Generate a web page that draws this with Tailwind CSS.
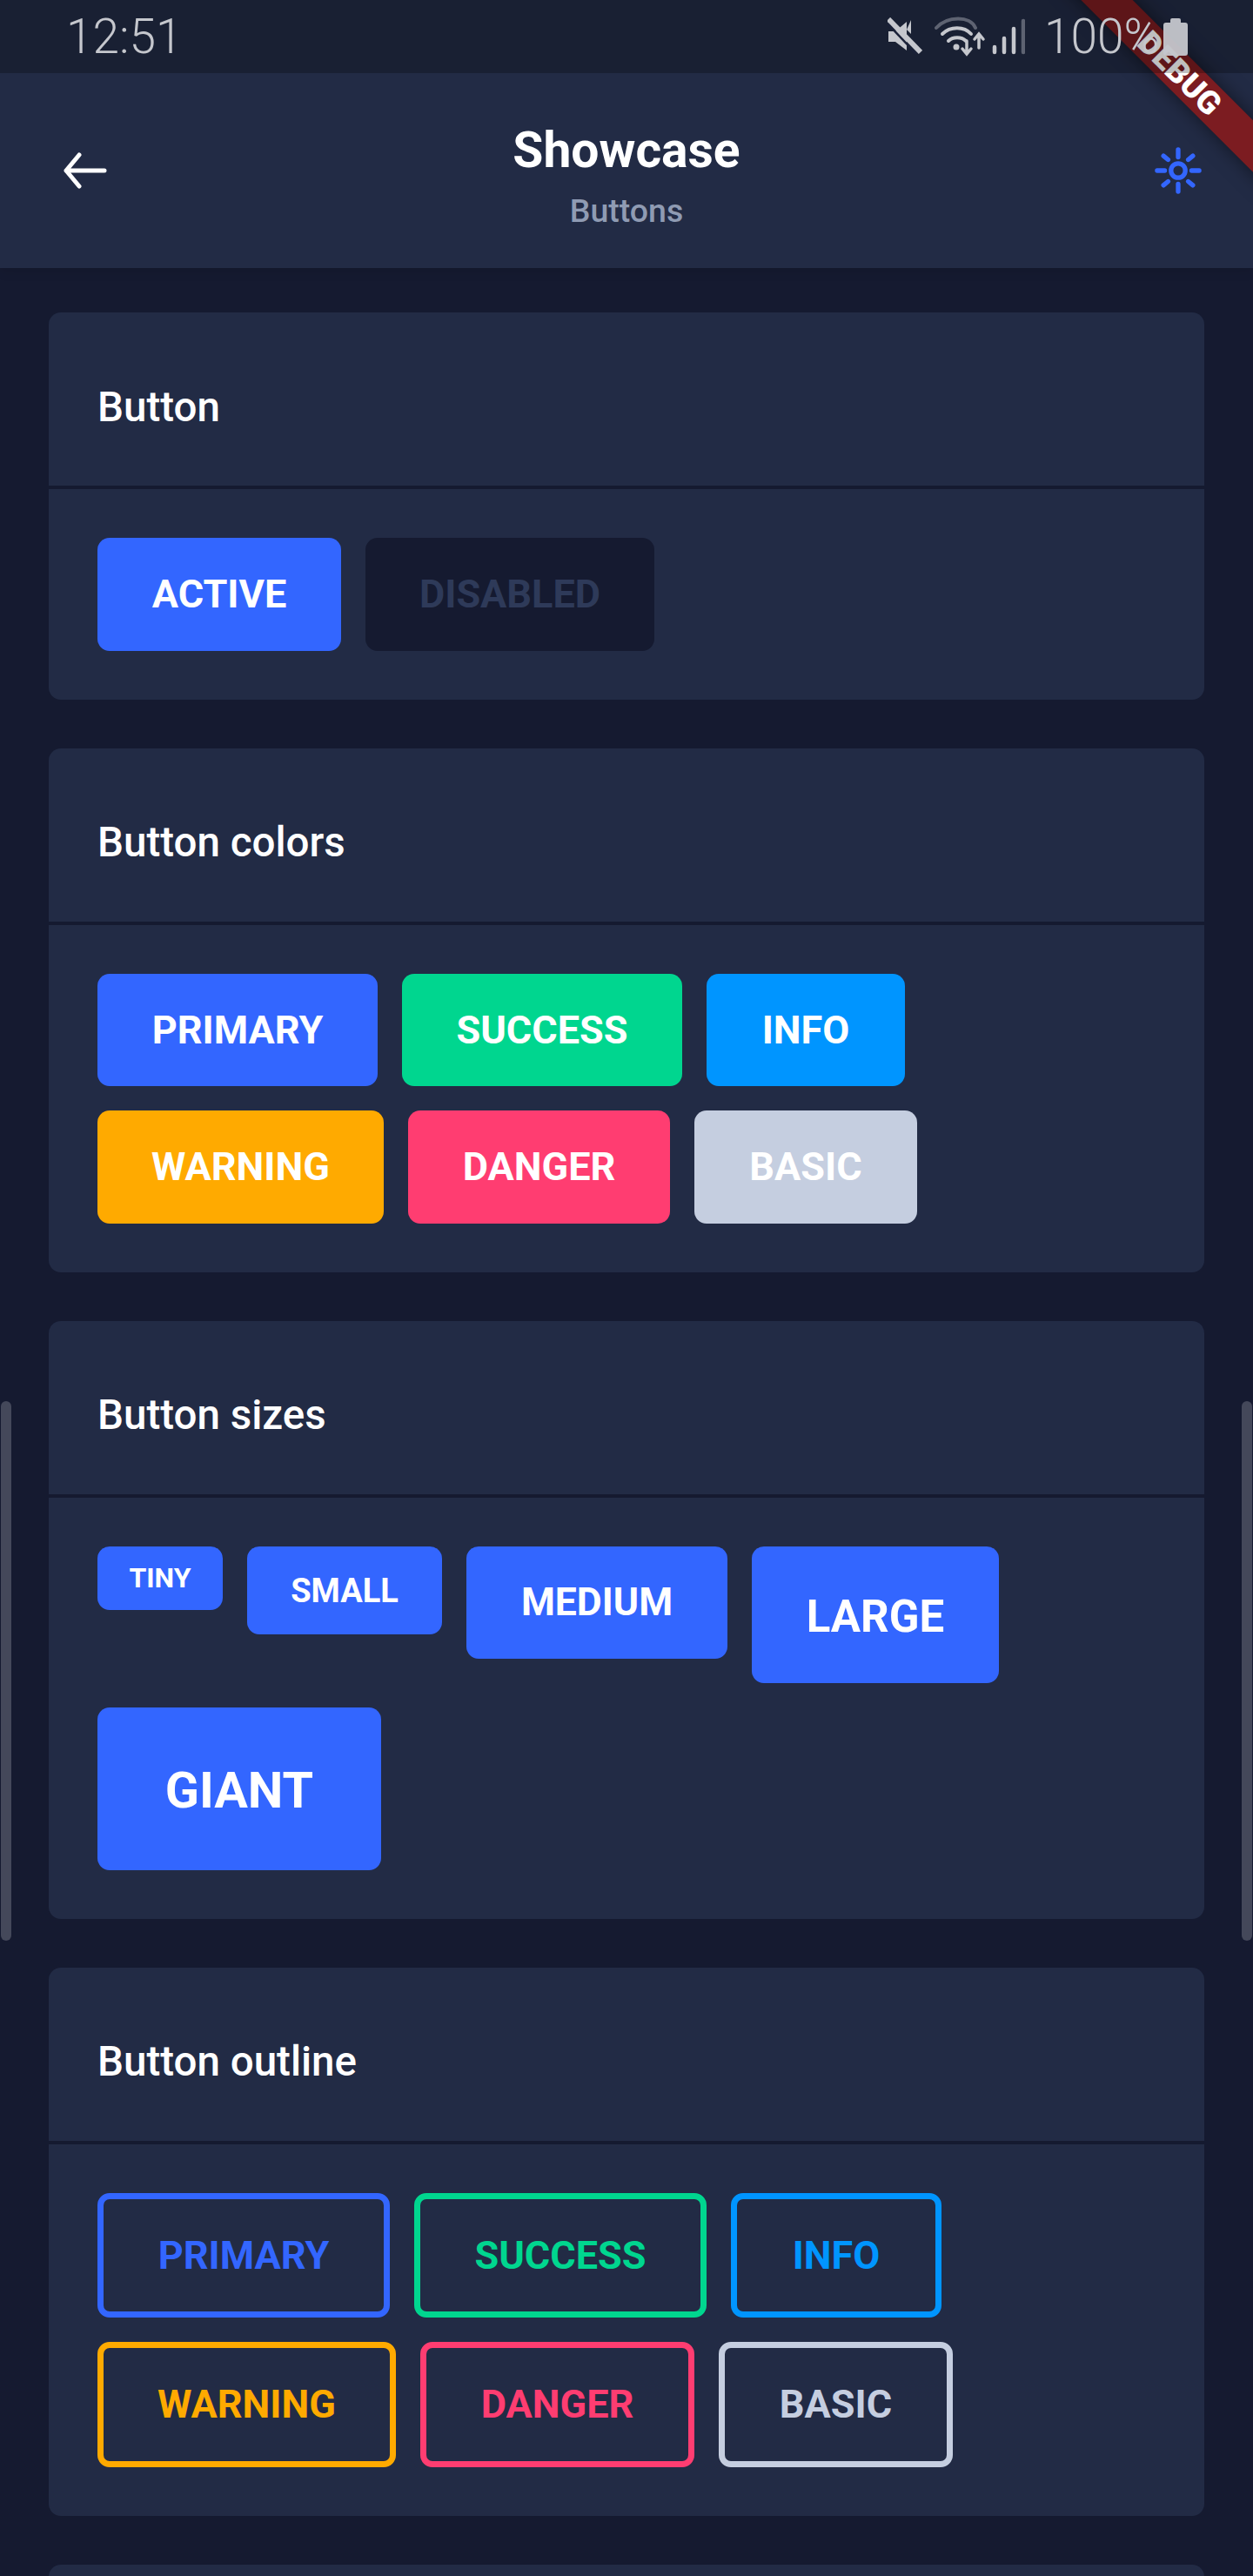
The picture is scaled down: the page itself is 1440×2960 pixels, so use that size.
<!DOCTYPE html>
<html lang="en">
<head>
  <meta charset="UTF-8" />
  <meta name="viewport" content="width=device-width, initial-scale=1.0" />
  <title>Showcase - Buttons</title>
  <script src="https://cdn.jsdelivr.net/npm/@tailwindcss/browser@4"></script>
</head>
<body class="bg-[#151A30] font-['Roboto',sans-serif] text-white">
<div class="relative w-[1440px] h-[2960px] overflow-hidden">

  <!-- app bar -->
  <header class="h-[308px] bg-[#222B45] pt-[84px] flex items-center shadow-[0_2px_14px_rgba(0,0,0,0.12)]">
    <button class="w-[168px] h-[224px] flex items-center justify-center shrink-0 pl-[28px]">
      <svg width="50" height="44" viewBox="0 0 50 44" fill="none" stroke="#fff" stroke-width="5" stroke-linecap="round" stroke-linejoin="round"><path d="M47 22H3M18 4 3 22l15 18" /></svg>
    </button>
    <div class="flex-1 text-center pt-[12px]">
      <div class="text-[57px] leading-[66px] font-bold">Showcase</div>
      <div class="text-[37.5px] leading-[44px] mt-[14px] font-medium text-[#8F9BB3]">Buttons</div>
    </div>
    <button class="w-[168px] h-[224px] flex items-center justify-center shrink-0 pr-[4px]">
      <svg width="54" height="54" viewBox="0 0 56 56" fill="none" stroke="#3366FF" stroke-linecap="round">
        <circle cx="28" cy="28" r="8.5" stroke-width="5.5" />
        <path stroke-width="5.5" d="M28 3v9M28 44v9M3 28h9M44 28h9M10.5 10.5l5.5 4.5M45.5 10.5 40 15M10.5 45.5l5.5-4.5M45.5 45.5 40 41" />
      </svg>
    </button>
  </header>

  <main class="px-[56px] pt-[51px] flex flex-col gap-[56px]">

    <section class="bg-[#222B45] rounded-[14px]">
      <h2 class="flex items-center px-[56px] pt-[20px] text-[47.5px] font-medium text-white border-b-[4px] border-[#151A30] box-border h-[203px]">Button</h2>
      <div class="p-[56px] flex gap-[28px]">
        <button class="w-[280px] h-[129.5px] rounded-[14px] bg-[#3366FF] text-[45px] font-bold">ACTIVE</button>
        <button class="w-[332px] h-[129.5px] rounded-[14px] bg-[#151A30] text-[45px] font-bold text-[#2E3A59]">DISABLED</button>
      </div>
    </section>

    <section class="bg-[#222B45] rounded-[14px]">
      <h2 class="flex items-center px-[56px] pt-[20px] text-[47.5px] font-medium text-white border-b-[4px] border-[#151A30] box-border h-[203px]">Button colors</h2>
      <div class="p-[56px] flex flex-col gap-[28px]">
        <div class="flex gap-[28px]">
          <button class="w-[322px] h-[129.5px] rounded-[14px] bg-[#3366FF] text-[45px] font-bold">PRIMARY</button>
          <button class="w-[322px] h-[129.5px] rounded-[14px] bg-[#00D68F] text-[45px] font-bold">SUCCESS</button>
          <button class="w-[228px] h-[129.5px] rounded-[14px] bg-[#0095FF] text-[45px] font-bold">INFO</button>
        </div>
        <div class="flex gap-[28px]">
          <button class="w-[329px] h-[129.5px] rounded-[14px] bg-[#FFAA00] text-[45px] font-bold">WARNING</button>
          <button class="w-[301px] h-[129.5px] rounded-[14px] bg-[#FF3D71] text-[45px] font-bold">DANGER</button>
          <button class="w-[256px] h-[129.5px] rounded-[14px] bg-[#C5CEE0] text-[45px] font-bold">BASIC</button>
        </div>
      </div>
    </section>

    <section class="bg-[#222B45] rounded-[14px]">
      <h2 class="flex items-center px-[56px] pt-[20px] text-[47.5px] font-medium text-white border-b-[4px] border-[#151A30] box-border h-[203px]">Button sizes</h2>
      <div class="p-[56px] flex flex-wrap items-start gap-[28px]">
        <button class="w-[144px] h-[73.5px] rounded-[14px] bg-[#3366FF] text-[32px] font-bold">TINY</button>
        <button class="w-[224px] h-[101.5px] rounded-[14px] bg-[#3366FF] text-[38px] font-bold pt-[3px]">SMALL</button>
        <button class="w-[300px] h-[129.5px] rounded-[14px] bg-[#3366FF] text-[44.5px] font-bold">MEDIUM</button>
        <button class="w-[284px] h-[157.5px] rounded-[14px] bg-[#3366FF] text-[51px] font-bold pt-[6px]">LARGE</button>
        <button class="w-[326px] h-[186.5px] rounded-[14px] bg-[#3366FF] text-[57.5px] font-bold pt-[6px]">GIANT</button>
      </div>
    </section>

    <section class="bg-[#222B45] rounded-[14px]">
      <h2 class="flex items-center px-[56px] pt-[20px] text-[47.5px] font-medium text-white border-b-[4px] border-[#151A30] box-border h-[203px]">Button outline</h2>
      <div class="p-[56px] flex flex-col gap-[28px]">
        <div class="flex gap-[28px]">
          <button class="w-[336px] h-[143.5px] rounded-[14px] border-[7px] border-[#3366FF] text-[#3366FF] text-[45px] font-bold">PRIMARY</button>
          <button class="w-[336px] h-[143.5px] rounded-[14px] border-[7px] border-[#00D68F] text-[#00D68F] text-[45px] font-bold">SUCCESS</button>
          <button class="w-[242px] h-[143.5px] rounded-[14px] border-[7px] border-[#0095FF] text-[#0095FF] text-[45px] font-bold">INFO</button>
        </div>
        <div class="flex gap-[28px]">
          <button class="w-[343px] h-[143.5px] rounded-[14px] border-[7px] border-[#FFAA00] text-[#FFAA00] text-[45px] font-bold">WARNING</button>
          <button class="w-[315px] h-[143.5px] rounded-[14px] border-[7px] border-[#FF3D71] text-[#FF3D71] text-[45px] font-bold">DANGER</button>
          <button class="w-[269px] h-[143.5px] rounded-[14px] border-[7px] border-[#C5CEE0] text-[#C5CEE0] text-[45px] font-bold">BASIC</button>
        </div>
      </div>
    </section>

    <section class="bg-[#222B45] rounded-[14px] h-[200px]"></section>
  </main>

  <!-- scrollbars -->
  <div class="absolute left-[1px] top-[1610px] w-[12px] h-[620px] rounded-full bg-[#44485A]"></div>
  <div class="absolute right-[1px] top-[1610px] w-[12px] h-[620px] rounded-full bg-[#44485A]"></div>

  <!-- debug banner -->
  <div class="absolute left-[1186px] top-[63px] w-[340px] h-[42px] rotate-45 bg-[#7C1C21] shadow-[0_0_21px_rgba(0,0,0,0.5)] flex items-center justify-center text-[37px] leading-none font-black text-white">DEBUG</div>

  <!-- android status bar -->
  <div class="absolute inset-x-0 top-0 h-[84px] bg-black/25 flex items-center justify-between pl-[76px] pr-[75px] text-[#C5C7CD]">
    <span class="text-[55px] font-light leading-none">12:51</span>
    <div class="flex items-center">
      <svg width="40" height="44" viewBox="0 0 40 44" fill="#C5C7CD" class="mr-[14px]">
        <path d="M1 16h8l13-11v33L9 28H1z" />
        <path d="M27 3v16L22 14z" />
        <path d="M1 2 38 40" stroke="#C5C7CD" stroke-width="6" />
        <path d="M-1 6 33 42" stroke="#1A2138" stroke-width="2.5" />
      </svg>
      <svg width="60" height="46" viewBox="0 0 60 46" fill="none" stroke-linecap="round" class="mr-[6px]">
        <path d="M2 13C15-1 41-1 47 13" stroke="#5E6372" stroke-width="4" />
        <path d="M9 20c9-9 25-9 33 0" stroke="#C5C7CD" stroke-width="4" />
        <path d="M16 28c5-5 15-5 20 0" stroke="#C5C7CD" stroke-width="4" />
        <circle cx="25" cy="35" r="3.5" fill="#C5C7CD" />
        <path d="M37 28v13M32 37l5 6 5-6" stroke="#C5C7CD" stroke-width="3.5" />
        <path d="M51 36V21M46 26l5-6 5 6" stroke="#C5C7CD" stroke-width="3.5" />
      </svg>
      <svg width="38" height="42" viewBox="0 0 38 42" fill="none" stroke-width="4.5" stroke-linecap="round" class="mr-[22px]">
        <path d="M3 33v6M14 23v16M25 12v27" stroke="#C5C7CD" />
        <path d="M36 3v36" stroke="#5E6372" />
      </svg>
      <span class="text-[55px] font-light leading-none w-[137px]">100%</span>
      <svg width="28" height="44" viewBox="0 0 28 44" fill="#C5C7CD" class="opacity-95">
        <path d="M8 3a2 2 0 0 1 2-2h8a2 2 0 0 1 2 2v3h5a3 3 0 0 1 3 3v32a3 3 0 0 1-3 3H3a3 3 0 0 1-3-3V9a3 3 0 0 1 3-3h5z" />
      </svg>
    </div>
  </div>
</div>
</body>
</html>
